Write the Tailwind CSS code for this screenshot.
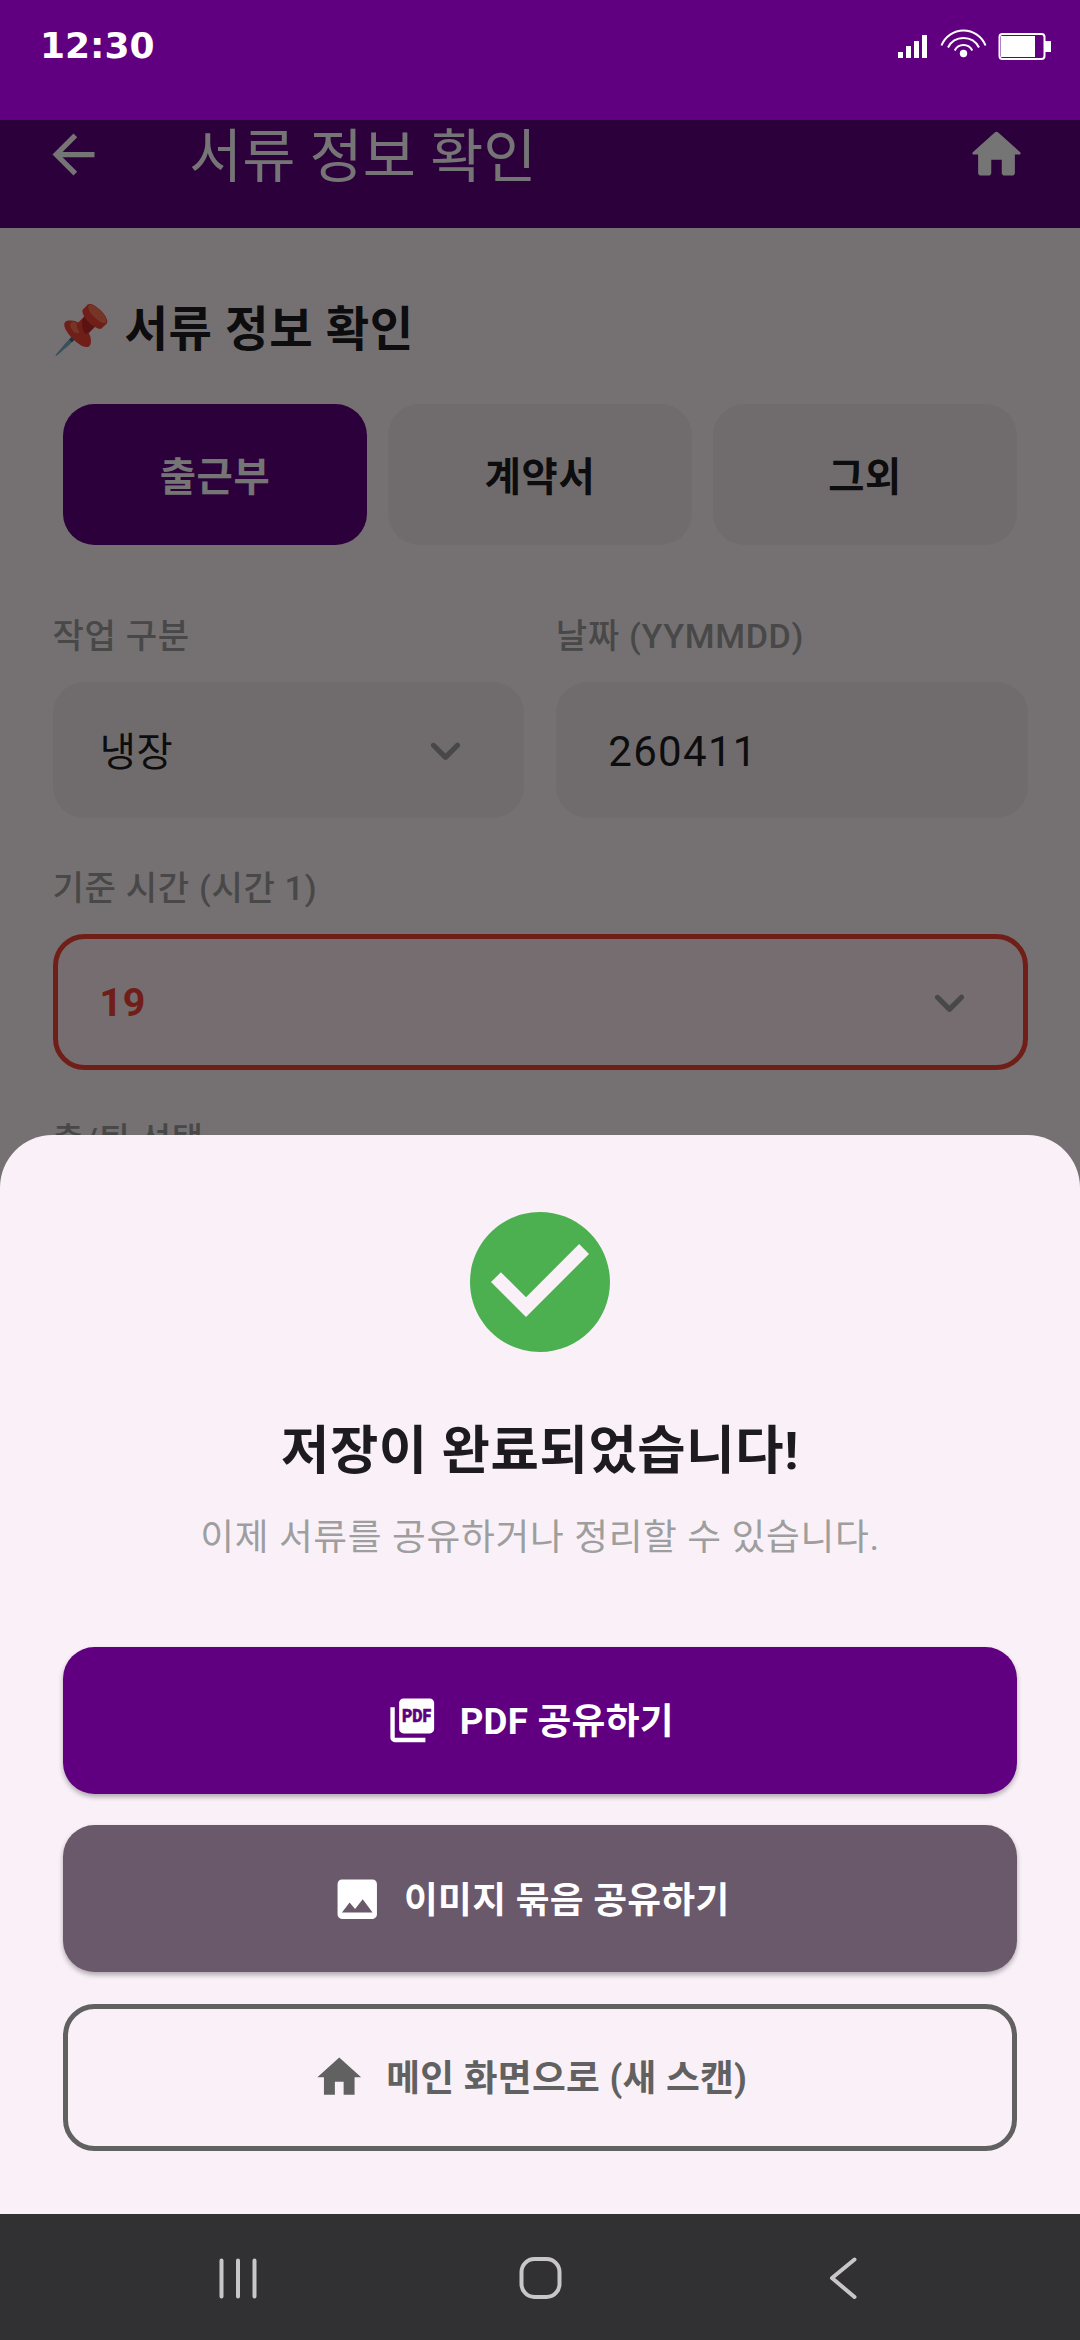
<!DOCTYPE html>
<html lang="ko">
<head>
    <meta charset="UTF-8">
    <meta name="viewport" content="width=device-width, initial-scale=1.0">
    <title>서류 정보 확인</title>
    <!-- Tailwind CSS CDN -->
    <script src="https://cdn.jsdelivr.net/npm/@tailwindcss/browser@4"></script>
</head>
<body class="w-[1080px] h-[2340px] overflow-hidden flex flex-col bg-[#fef6f9] text-[#1d1b20] tracking-[0.656px] whitespace-nowrap font-[Roboto,'Noto_Sans_CJK_KR',sans-serif]">

    <!-- Status bar -->
    <header class="relative z-10 shrink-0 h-[120px] bg-[#600080] text-white flex justify-between items-start pl-10 pr-7 pt-[25px]">
        <span class="text-[36px] leading-[42px] font-bold tracking-normal font-['DejaVu_Sans',sans-serif]">12:30</span>
        <svg class="w-[156px] h-[42px]" viewBox="896 25 156 42" fill="currentColor">
            <path d="M898 52h5v6h-5zM906 46h5v12h-5zM914 41h5v17h-5zM922 35h5v23h-5z"/>
            <g fill="none" stroke="currentColor" stroke-width="2">
                <path d="M941.5 45.5a23.6 23.6 0 0 1 44 0M948 47.5a17.4 17.4 0 0 1 31 0M954.7 50.5a9.8 9.8 0 0 1 17.6 0"/>
                <rect x="999.5" y="34" width="45" height="25" rx="3"/>
            </g>
            <circle cx="963.5" cy="53.5" r="3.7"/>
            <path d="M1001 36h34v21h-34zM1045 41h6v11h-6z"/>
        </svg>
    </header>

    <div class="relative shrink-0 h-[2094px] overflow-hidden">

        <!-- App bar -->
        <div class="h-[108px] bg-[#600080] text-white">
            <div class="h-[147px] -translate-y-[39px] flex items-center pl-[42px] pr-[52.5px]">
                <svg class="size-[63px]" viewBox="0 0 24 24" fill="currentColor"><path d="M20 11H7.83l5.59-5.59L12 4l-8 8 8 8 1.41-1.41L7.83 13H20v-2z"/></svg>
                <h1 class="ml-[84px] pt-[5px] grow text-[57.75px] leading-[74px] tracking-normal font-normal">서류 정보 확인</h1>
                <svg class="size-[63px]" viewBox="0 0 24 24" fill="currentColor"><path d="M10 19v-5h4v5c0 .55.45 1 1 1h3c.55 0 1-.45 1-1v-7h1.7c.46 0 .68-.57.33-.87L12.67 3.6c-.38-.34-.96-.34-1.34 0l-8.36 7.53c-.34.3-.13.87.33.87H5v7c0 .55.45 1 1 1h3c.55 0 1-.45 1-1z"/></svg>
            </div>
        </div>

        <!-- Form -->
        <main class="px-[52.5px] pt-[70px]">
            <h2 class="h-[64px] leading-[64px] text-[47.25px] font-bold"><span class="font-['Noto_Color_Emoji']">📌</span> 서류 정보 확인</h2>

            <div class="mt-[41.5px] px-[10.5px] grid grid-cols-3 gap-[21px] text-[39.375px] font-bold">
                <div class="h-[141.75px] pt-[7px] rounded-[31.5px] flex items-center justify-center bg-[#600080] text-white">출근부</div>
                <div class="h-[141.75px] pt-[7px] rounded-[31.5px] flex items-center justify-center bg-[#f3ebed]">계약서</div>
                <div class="h-[141.75px] pt-[7px] rounded-[31.5px] flex items-center justify-center bg-[#f3ebed]">그외</div>
            </div>

            <div class="mt-[66px] grid grid-cols-2 gap-[31.5px]">
                <div>
                    <div class="h-[50px] leading-[50px] text-[34.125px] font-medium text-[#9e9e9e]">작업 구분</div>
                    <div class="mt-[20.5px] h-[136.5px] rounded-[31.5px] bg-[#f3ebed] px-[47.25px] flex items-center justify-between text-[39.375px]">
                        <span class="pt-[5px]">냉장</span>
                        <svg class="size-[63px] text-[#9e9e9e]" viewBox="0 0 24 24" fill="currentColor"><path d="M8.12 9.29L12 13.17l3.88-3.88c.39-.39 1.02-.39 1.41 0 .39.39.39 1.02 0 1.41l-4.59 4.59c-.39.39-1.02.39-1.41 0L6.7 10.7c-.39-.39-.39-1.02 0-1.41.39-.38 1.03-.39 1.42 0z"/></svg>
                    </div>
                </div>
                <div>
                    <div class="h-[50px] leading-[50px] text-[34.125px] font-medium text-[#9e9e9e]">날짜 (YYMMDD)</div>
                    <div class="mt-[20.5px] h-[136.5px] rounded-[31.5px] bg-[#f3ebed] px-[52.5px] pt-[2px] flex items-center text-[42px] tracking-[1.31px]">260411</div>
                </div>
            </div>

            <div class="mt-[45px] h-[50px] leading-[50px] text-[34.125px] font-medium text-[#9e9e9e]">기준 시간 (시간 1)</div>
            <div class="mt-[20.5px] h-[136.5px] rounded-[31.5px] border-[5.25px] border-[#f44336] bg-[#ffedf2] px-[42px] flex items-center justify-between text-[39.375px] font-bold text-[#f44336]">
                <span class="pt-[2px]">19</span>
                <svg class="size-[63px] text-[#9e9e9e]" viewBox="0 0 24 24" fill="currentColor"><path d="M8.12 9.29L12 13.17l3.88-3.88c.39-.39 1.02-.39 1.41 0 .39.39.39 1.02 0 1.41l-4.59 4.59c-.39.39-1.02.39-1.41 0L6.7 10.7c-.39-.39-.39-1.02 0-1.41.39-.38 1.03-.39 1.42 0z"/></svg>
            </div>

            <div class="mt-[45px] h-[50px] leading-[50px] text-[34.125px] font-medium text-[#9e9e9e]">출/퇴 선택</div>
        </main>

        <!-- Scrim -->
        <div class="absolute inset-0 bg-black/54"></div>

        <!-- Bottom sheet -->
        <section class="absolute inset-x-0 bottom-0 h-[1079px] rounded-t-[52.5px] bg-[#faf1f8] px-[63px] pt-[63px] flex flex-col items-center">
            <svg class="size-[168px] text-[#4caf50]" viewBox="0 0 24 24" fill="currentColor"><path d="M12 2C6.48 2 2 6.48 2 12s4.48 10 10 10 10-4.48 10-10S17.52 2 12 2zm-2 15l-5-5 1.41-1.41L10 14.17l7.59-7.59L19 8l-9 9z"/></svg>
            <h3 class="mt-[47px] h-[76px] leading-[76px] text-[52.5px] font-bold">저장이 완료되었습니다!</h3>
            <p class="mt-[22px] h-[54px] leading-[54px] text-[36.75px] text-[#9e9e9e]">이제 서류를 공유하거나 정리할 수 있습니다.</p>

            <div class="mt-[81.75px] w-full flex flex-col gap-[31.5px] text-[36.75px] font-bold tracking-[0.26px]">
                <div class="h-[147px] pr-[20px] rounded-[31.5px] bg-[#600080] text-white flex items-center justify-center gap-[21px] shadow-[0_3px_5px_rgba(0,0,0,0.3)]">
                    <svg class="size-[52.5px]" viewBox="0 0 24 24" fill="currentColor">
                        <path d="M4 6H2v14c0 1.1.9 2 2 2h14v-2H4z"/>
                        <rect x="6" y="2" width="16" height="16" rx="2"/>
                        <text x="7.3" y="13" font-size="8.4" font-weight="900" letter-spacing="0" textLength="13.4" lengthAdjust="spacingAndGlyphs" fill="#600080" stroke="#600080" stroke-width="0.2">PDF</text>
                    </svg>
                    <span class="pt-[3px]">PDF 공유하기</span>
                </div>
                <div class="h-[147px] pr-[20px] rounded-[31.5px] bg-[#69596b] text-white flex items-center justify-center gap-[21px] shadow-[0_3px_5px_rgba(0,0,0,0.3)]">
                    <svg class="size-[52.5px]" viewBox="0 0 24 24" fill="currentColor"><path d="M21 19V5c0-1.1-.9-2-2-2H5c-1.1 0-2 .9-2 2v14c0 1.1.9 2 2 2h14c1.1 0 2-.9 2-2zM8.5 13.5l2.5 3.01L14.5 12l4.5 6H5l3.5-4.5z"/></svg>
                    <span class="pt-[3px]">이미지 묶음 공유하기</span>
                </div>
                <div class="h-[147px] pr-[20px] rounded-[31.5px] border-[5.25px] border-[#616161] text-[#616161] flex items-center justify-center gap-[21px]">
                    <svg class="size-[52.5px]" viewBox="0 0 24 24" fill="currentColor"><path d="M10 20v-6h4v6h5v-8h3L12 3 2 12h3v8z"/></svg>
                    <span class="pt-[3px]">메인 화면으로 (새 스캔)</span>
                </div>
            </div>
        </section>
    </div>

    <!-- Navigation bar -->
    <nav class="h-[126px] shrink-0 bg-[#313033] flex items-center justify-between px-[207px]">
        <svg class="w-[63px] h-[63px]" viewBox="0 0 63 63" fill="none" stroke="#c8c6ca" stroke-width="4" stroke-linecap="round"><path d="M14.5 14.5v36M31 14.5v36M47.5 14.5v36"/></svg>
        <svg class="w-[63px] h-[63px]" viewBox="0 0 63 63" fill="none" stroke="#c8c6ca" stroke-width="4"><rect x="12.5" y="13" width="38" height="38" rx="13"/></svg>
        <svg class="w-[63px] h-[63px]" viewBox="0 0 63 63" fill="none" stroke="#c8c6ca" stroke-width="4" stroke-linecap="round" stroke-linejoin="round"><path d="M44.500 13.500L22 32l22.500 19"/></svg>
    </nav>

</body>
</html>
